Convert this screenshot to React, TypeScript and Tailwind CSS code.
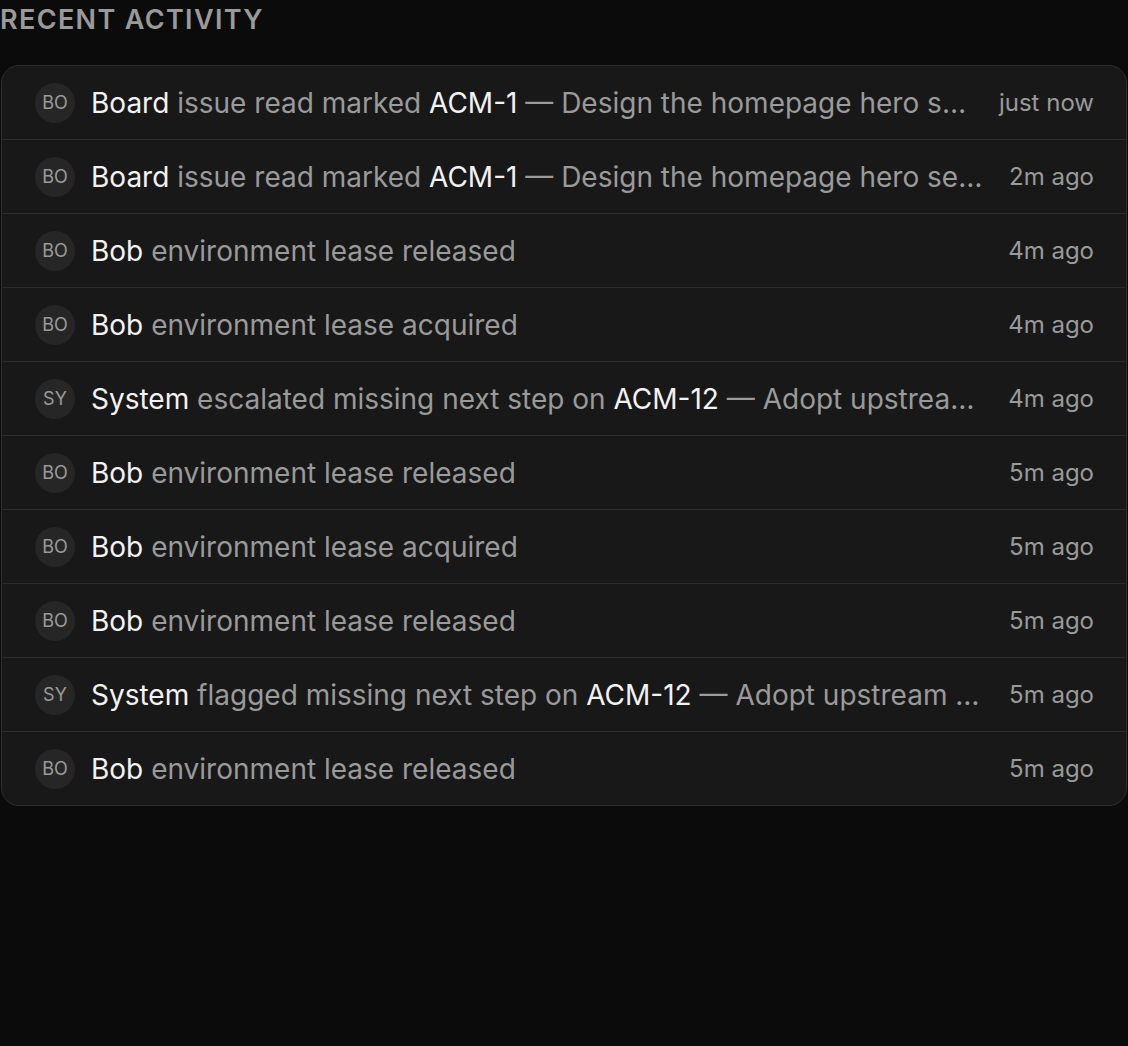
const rows = [
  { initials: 'BO', actor: 'Board', action: 'issue read marked', ref: 'ACM-1', title: 'Design the homepage hero section with new brand assets', time: 'just now' },
  { initials: 'BO', actor: 'Board', action: 'issue read marked', ref: 'ACM-1', title: 'Design the homepage hero section with new brand assets', time: '2m ago' },
  { initials: 'BO', actor: 'Bob', action: 'environment lease released', time: '4m ago' },
  { initials: 'BO', actor: 'Bob', action: 'environment lease acquired', time: '4m ago' },
  { initials: 'SY', actor: 'System', action: 'escalated missing next step on', ref: 'ACM-12', title: 'Adopt upstream changes to the build pipeline', time: '4m ago' },
  { initials: 'BO', actor: 'Bob', action: 'environment lease released', time: '5m ago' },
  { initials: 'BO', actor: 'Bob', action: 'environment lease acquired', time: '5m ago' },
  { initials: 'BO', actor: 'Bob', action: 'environment lease released', time: '5m ago' },
  { initials: 'SY', actor: 'System', action: 'flagged missing next step on', ref: 'ACM-12', title: 'Adopt upstream changes to the build pipeline', time: '5m ago' },
  { initials: 'BO', actor: 'Bob', action: 'environment lease released', time: '5m ago' },
]

export default function App() {
  return (
    <div className="min-h-[1046px] bg-[#0b0b0b] font-['Inter',sans-serif]">
      <h2 className="text-[27px] leading-[40px] font-semibold tracking-[0.05em] uppercase text-[#9a9a9a]">
        Recent activity
      </h2>
      <div className="mt-[25px] mx-px rounded-[18px] border border-[#2d2d2d] bg-[#181818] overflow-hidden">
        {rows.map((r, i) => (
          <div
            key={i}
            className={`flex items-center pl-[33px] pr-[32px] gap-4 ${i > 0 ? 'h-[74px] border-t border-[#2d2d2d]' : 'h-[73px]'}`}
          >
            <div className="w-10 h-10 shrink-0 rounded-full bg-[#262626] flex items-center justify-center text-[18px] text-[#9a9a9a]">
              {r.initials}
            </div>
            <div className="flex-1 min-w-0 truncate text-[28px] text-[#9a9a9a]">
              <span className="text-[#f2f2f2]">{r.actor}</span> {r.action}
              {r.ref && (
                <>
                  {' '}
                  <span className="text-[#f2f2f2]">{r.ref}</span> — {r.title}
                </>
              )}
            </div>
            <div className="shrink-0 ml-2 text-[24px] text-[#9a9a9a]">{r.time}</div>
          </div>
        ))}
      </div>
    </div>
  )
}
